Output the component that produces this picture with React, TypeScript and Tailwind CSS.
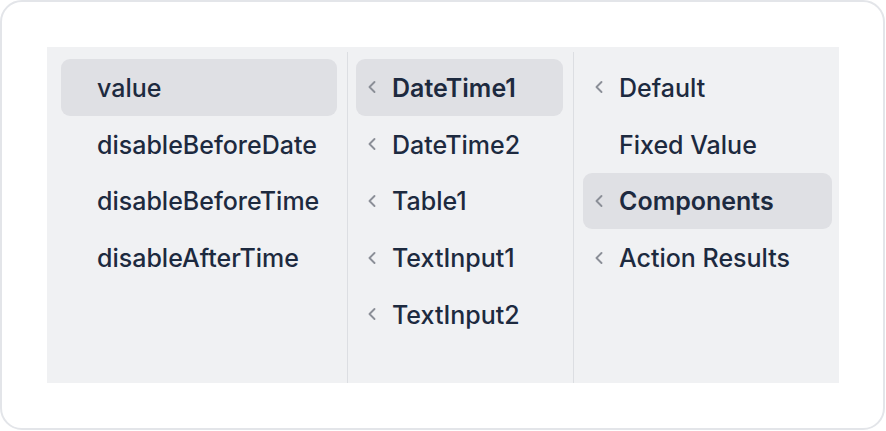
import React from "react";

type Item = { label: string; chevron: boolean; selected?: boolean; bold?: boolean };

const col1: Item[] = [
  { label: "value", chevron: false, selected: true },
  { label: "disableBeforeDate", chevron: false },
  { label: "disableBeforeTime", chevron: false },
  { label: "disableAfterTime", chevron: false },
];

const col2: Item[] = [
  { label: "DateTime1", chevron: true, selected: true, bold: true },
  { label: "DateTime2", chevron: true },
  { label: "Table1", chevron: true },
  { label: "TextInput1", chevron: true },
  { label: "TextInput2", chevron: true },
];

const col3: Item[] = [
  { label: "Default", chevron: true },
  { label: "Fixed Value", chevron: false },
  { label: "Components", chevron: true, selected: true, bold: true },
  { label: "Action Results", chevron: true },
];

function Chevron() {
  return (
    <svg width="12" height="16" viewBox="0 0 12 16" fill="none" className="shrink-0">
      <path d="M8.5 3 L3.5 8 L8.5 13" stroke="#8b8f97" strokeWidth="1.9" strokeLinecap="round" strokeLinejoin="round" />
    </svg>
  );
}

function Row({ item }: { item: Item }) {
  return (
    <div
      className={
        "flex h-[56.75px] shrink-0 items-center rounded-[9px] pl-[10px] " +
        (item.selected ? "bg-[#dfe0e4]" : "")
      }
    >
      <div className="flex w-[26px] shrink-0 items-center">{item.chevron ? <Chevron /> : null}</div>
      <span
        className={
          "whitespace-nowrap pt-[2px] text-[25px] leading-none text-[#1d2a3f] " +
          (item.bold ? "font-semibold" : "font-medium")
        }
      >
        {item.label}
      </span>
    </div>
  );
}

export default function App() {
  return (
    <div
      className="h-[431px] w-[886px] bg-white"
      style={{ fontFamily: "Inter, 'Noto Sans', sans-serif" }}
    >
      <div className="h-[430px] w-[885px] rounded-[22px] border-2 border-[#e3e5e9] pl-[45px] pt-[45px]">
        <div className="flex h-[336px] w-[792px] bg-[#f0f1f3]">
          <div className="flex w-[300px] flex-col pl-[14px] pr-[10px] pt-[12px]">
            {col1.map((it) => (
              <Row key={it.label} item={it} />
            ))}
          </div>
          <div className="mt-[5px] w-px bg-[#dcdee2]" />
          <div className="flex w-[225px] flex-col pl-[8px] pr-[10px] pt-[12px]">
            {col2.map((it) => (
              <Row key={it.label} item={it} />
            ))}
          </div>
          <div className="mt-[5px] w-px bg-[#dcdee2]" />
          <div className="flex flex-1 flex-col pl-[9px] pr-[7px] pt-[12px]">
            {col3.map((it) => (
              <Row key={it.label} item={it} />
            ))}
          </div>
        </div>
      </div>
    </div>
  );
}
